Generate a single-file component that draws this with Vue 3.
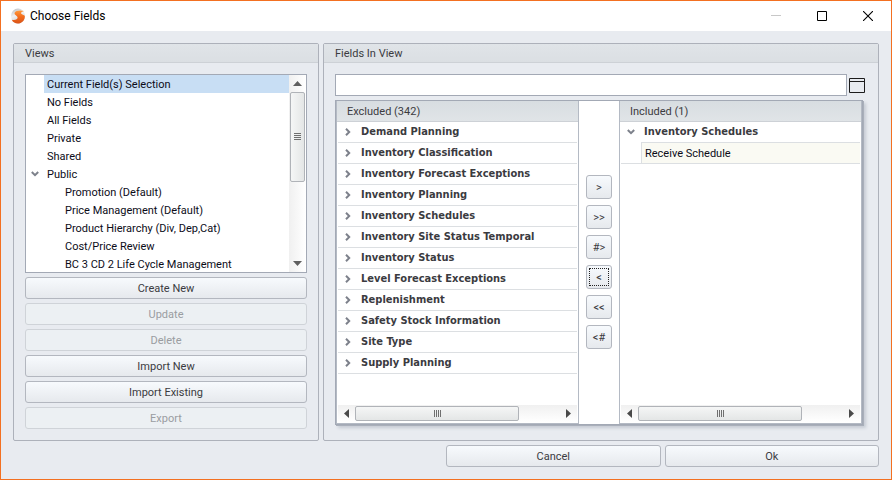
<script setup>
import { ref } from 'vue'

const views = [
  { name: 'Current Field(s) Selection', level: 1 },
  { name: 'No Fields', level: 1 },
  { name: 'All Fields', level: 1 },
  { name: 'Private', level: 1 },
  { name: 'Shared', level: 1 },
  { name: 'Public', level: 1, open: true },
  { name: 'Promotion (Default)', level: 2 },
  { name: 'Price Management (Default)', level: 2 },
  { name: 'Product Hierarchy (Div, Dep,Cat)', level: 2 },
  { name: 'Cost/Price Review', level: 2 },
  { name: 'BC 3 CD 2 Life Cycle Management', level: 2 },
]
const selected = ref('Current Field(s) Selection')
const search = ref('')

const actions = [
  { label: 'Create New' },
  { label: 'Update', disabled: true },
  { label: 'Delete', disabled: true },
  { label: 'Import New' },
  { label: 'Import Existing' },
  { label: 'Export', disabled: true },
]

const excluded = [
  'Demand Planning',
  'Inventory Classification',
  'Inventory Forecast Exceptions',
  'Inventory Planning',
  'Inventory Schedules',
  'Inventory Site Status Temporal',
  'Inventory Status',
  'Level Forecast Exceptions',
  'Replenishment',
  'Safety Stock Information',
  'Site Type',
  'Supply Planning',
]

const moves = ['>', '>>', '#>', '<', '<<', '<#']
const focusedMove = ref('<')
</script>

<template>
  <div class="window">
    <header class="titlebar">
      <svg class="logo" width="16" height="16" viewBox="0 0 16 16" aria-hidden="true">
        <defs>
          <linearGradient id="orb" x1="0" y1="0" x2="0.4" y2="1">
            <stop offset="0" stop-color="#b4b7bb" />
            <stop offset="0.5" stop-color="#f1f1f2" />
            <stop offset="1" stop-color="#c9cbce" />
          </linearGradient>
          <linearGradient id="ess" x1="0" y1="0" x2="0" y2="1">
            <stop offset="0" stop-color="#ff9a3d" />
            <stop offset="0.5" stop-color="#f26a1b" />
            <stop offset="1" stop-color="#d9541a" />
          </linearGradient>
        </defs>
        <ellipse cx="8" cy="8" rx="7" ry="7.6" fill="url(#orb)" />
        <path
          d="M14 3C11 2 5.600 2.200 4.600 4.800C4 7 7.400 7.600 7.600 9.600C7.800 11.800 4.600 12.400 1.800 11.800C3 15 6.500 16 9.200 15.400C13 14.400 15 11.500 14.800 8C14.400 6.800 11.200 6.400 11 5.200C11 4 12.600 3.600 14 3Z"
          fill="url(#ess)"
        />
      </svg>
      <h1>Choose Fields</h1>
      <div class="controls">
        <button type="button" aria-label="Minimize" disabled>
          <svg width="10" height="10" viewBox="0 0 10 10"><path d="M0 4.500H10" stroke="#c8c8c8" /></svg>
        </button>
        <button type="button" aria-label="Maximize">
          <svg width="10" height="10" viewBox="0 0 10 10"><path d="M.5 .5H9.500V9.500H.5Z" fill="none" stroke="#000" /></svg>
        </button>
        <button type="button" aria-label="Close">
          <svg width="10" height="10" viewBox="0 0 10 10"><path d="M0 0L10 10M10 0L0 10" stroke="#000" stroke-width="1.100" /></svg>
        </button>
      </div>
    </header>

    <main class="content">
      <div class="panels">
        <section class="panel views">
          <h2>Views</h2>
          <div class="panel-body">
            <div class="listbox">
              <ul role="tree" aria-label="Views">
                <li
                  v-for="v in views"
                  :key="v.name"
                  role="treeitem"
                  :class="{ child: v.level === 2 }"
                  :aria-selected="v.name === selected"
                  @click="selected = v.name"
                >
                  <span class="gutter">
                    <svg v-if="v.open" width="8" height="6" viewBox="0 0 8 6"><path d="M.8 1L4 4.200L7.200 1" class="chev" /></svg>
                  </span>
                  <span class="label">{{ v.name }}</span>
                </li>
              </ul>
              <div class="scroll vertical" aria-hidden="true">
                <svg width="17" height="17" viewBox="0 0 17 17"><path d="M4 11L8.500 6L13 11Z" fill="#5f5f5f" /></svg>
                <div class="track"><div class="thumb"><i></i></div></div>
                <svg width="17" height="17" viewBox="0 0 17 17"><path d="M4 6L8.500 11L13 6Z" fill="#5f5f5f" /></svg>
              </div>
            </div>
            <button v-for="a in actions" :key="a.label" type="button" class="btn" :disabled="a.disabled">
              {{ a.label }}
            </button>
          </div>
        </section>

        <section class="panel fields">
          <h2>Fields In View</h2>
          <div class="panel-body">
            <div class="search">
              <input v-model="search" type="text" aria-label="Search fields" />
              <button type="button" aria-label="Toggle layout">
                <svg width="16" height="15" viewBox="0 0 16 15"><path d="M.5 .5H15.500V14.500H.5ZM.5 3.500H15.500" fill="none" stroke="#1c1c1c" /></svg>
              </button>
            </div>

            <div class="transfer">
              <section class="pane">
                <h3>Excluded (342)</h3>
                <ul>
                  <li v-for="name in excluded" :key="name">
                    <span class="toggle">
                      <svg width="6" height="8" viewBox="0 0 6 8"><path d="M1 .8L4.200 4L1 7.200" class="chev" /></svg>
                    </span>
                    <b>{{ name }}</b>
                  </li>
                </ul>
                <div class="scroll horizontal" aria-hidden="true">
                  <svg width="17" height="17" viewBox="0 0 17 17"><path d="M11 4L6 8.500L11 13Z" fill="#4a4a4a" /></svg>
                  <div class="track"><div class="thumb"><i></i></div></div>
                  <svg width="17" height="17" viewBox="0 0 17 17"><path d="M6 4L11 8.500L6 13Z" fill="#4a4a4a" /></svg>
                </div>
              </section>

              <div class="moves">
                <button
                  v-for="m in moves"
                  :key="m"
                  type="button"
                  class="btn"
                  :class="{ focused: m === focusedMove }"
                  @click="focusedMove = m"
                >
                  <span>{{ m }}</span>
                </button>
              </div>

              <section class="pane">
                <h3>Included (1)</h3>
                <ul>
                  <li class="open">
                    <span class="toggle">
                      <svg width="8" height="6" viewBox="0 0 8 6"><path d="M.8 1L4 4.200L7.200 1" class="chev" /></svg>
                    </span>
                    <b>Inventory Schedules</b>
                  </li>
                  <li class="leaf"><span>Receive Schedule</span></li>
                </ul>
                <div class="scroll horizontal" aria-hidden="true">
                  <svg width="17" height="17" viewBox="0 0 17 17"><path d="M11 4L6 8.500L11 13Z" fill="#4a4a4a" /></svg>
                  <div class="track"><div class="thumb"><i></i></div></div>
                  <svg width="17" height="17" viewBox="0 0 17 17"><path d="M6 4L11 8.500L6 13Z" fill="#4a4a4a" /></svg>
                </div>
              </section>
            </div>
          </div>
        </section>
      </div>

      <footer class="footer">
        <button type="button" class="btn">Cancel</button>
        <button type="button" class="btn">Ok</button>
      </footer>
    </main>
  </div>
</template>

<style>
body {
  margin: 0;
}
</style>

<style scoped>
* {
  box-sizing: border-box;
}
.window {
  display: flex;
  flex-direction: column;
  min-height: 100vh;
  border: 1px solid #f37021;
  background: #e8ebf0;
  color: #3b3b3f;
  font: 11px/18px Tahoma, Roboto, sans-serif;
}
h1,
h2,
h3,
ul {
  margin: 0;
  padding: 0;
  font-size: inherit;
  font-weight: normal;
  list-style: none;
}
b {
  font-family: Tahoma, 'DejaVu Sans Condensed', 'DejaVu Sans', sans-serif;
}
button {
  padding: 0;
  border: 0;
  background: none;
  color: inherit;
  font: inherit;
}
svg {
  display: block;
  flex: none;
}
.chev {
  fill: none;
  stroke: #7d818b;
  stroke-width: 2;
}

.titlebar {
  display: flex;
  align-items: center;
  height: 30px;
  padding-left: 9px;
  background: #fff;
}
.titlebar h1 {
  flex: 1;
  margin-left: 4px;
  color: #000;
  font: 12px/16px 'Segoe UI', Roboto, sans-serif;
}
.controls {
  display: flex;
}
.controls button {
  display: grid;
  place-items: center;
  width: 46px;
  height: 30px;
}

.content {
  display: flex;
  flex: 1;
  flex-direction: column;
  gap: 4px;
  padding: 12px;
}
.panels {
  display: flex;
  flex: 1;
  gap: 4px;
}
.panel {
  display: flex;
  flex-direction: column;
  border: 1px solid #adb1ba;
  border-radius: 2px;
}
.views {
  flex: 0 0 306px;
}
.fields {
  flex: 1;
}
h2 {
  height: 19px;
  padding-left: 11px;
  border-bottom: 1px solid #cdd1d6;
  background: linear-gradient(#e0e4e8, #dbdfe3);
  line-height: 20px;
}
.panel-body {
  display: flex;
  flex: 1;
  flex-direction: column;
  gap: 4px;
  padding: 11px;
}

.btn {
  height: 22px;
  padding-top: 2px;
  border: 1px solid #b3b7bf;
  border-radius: 3px;
  background: linear-gradient(#f7fafd, #e6e9ed);
  text-align: center;
}
.btn:disabled {
  border-color: #cfd3d8;
  background: #ecf0f3;
  color: #9a9da1;
}

.listbox {
  display: flex;
  flex: 1 1 0;
  min-height: 110px;
  overflow: hidden;
  border: 1px solid #a3a9b5;
  background: #fff;
  color: #0c0c18;
}
.listbox ul {
  flex: 1;
}
.listbox li {
  display: flex;
  height: 18px;
}
.gutter {
  display: grid;
  flex: 0 0 18px;
  place-items: center;
}
.child .gutter {
  flex-basis: 36px;
}
.label {
  flex: 1;
  padding-left: 3px;
  line-height: 20px;
  white-space: nowrap;
}
[aria-selected='true'] .label {
  background: #c8def4;
}

.scroll {
  display: flex;
}
.scroll .track {
  flex: 1;
}
.thumb {
  display: grid;
  place-items: center;
  border: 1px solid #b0b3b8;
  border-radius: 2px;
}
.vertical {
  flex-direction: column;
  width: 17px;
  background: linear-gradient(90deg, #f0f0f0, #fff);
}
.vertical .track {
  padding: 0 1px;
}
.vertical .thumb {
  height: 55%;
  background: linear-gradient(90deg, #f5f6f6, #e4e6e6);
}
.vertical i {
  width: 7px;
  height: 8px;
  background: repeating-linear-gradient(#6f6f6f 0 1px, transparent 1px 2px);
}
.horizontal {
  margin: auto 1px 0;
  background: linear-gradient(#f0f0f0, #fff);
}
.horizontal .track {
  display: flex;
  padding: 1px 0;
}
.horizontal .thumb {
  width: 80%;
  background: linear-gradient(#f5f6f6, #e4e6e6);
}
.horizontal i {
  width: 7px;
  height: 7px;
  background: repeating-linear-gradient(90deg, #6f6f6f 0 1px, transparent 1px 2px);
}

.search {
  display: flex;
  align-items: center;
  gap: 2px;
  padding-right: 2px;
}
.search input {
  flex: 1;
  height: 22px;
  padding: 0 4px;
  border: 1px solid #a3a9b5;
  background: #fff;
  font: inherit;
}

.transfer {
  display: flex;
  flex: 1;
  margin: 0 4px 4px 0;
  border: 1px solid #a3a9b5;
  background: #fff;
  box-shadow: 1px 1px 0 #a9afba, 3px 3px 3px rgba(120, 128, 145, 0.3);
}
.pane {
  display: flex;
  flex: 1;
  flex-direction: column;
  padding-bottom: 1px;
  border: solid #b4bac4;
  border-width: 0 1px 1px;
}
.pane h3 {
  height: 21px;
  padding-left: 10px;
  border-bottom: 1px solid #cdd1d6;
  background: linear-gradient(#d8dde1, #e0e4e7);
  line-height: 21px;
}
.pane ul {
  padding: 0 1px;
}
.pane li {
  display: flex;
  align-items: center;
  height: 21px;
  border-bottom: 1px solid #dcdfe2;
}
.toggle {
  display: grid;
  place-items: center;
  width: 20px;
  margin-right: 3px;
}
.pane .open {
  height: 20px;
  border-bottom: 0;
}
.pane .leaf {
  height: 22px;
  padding-left: 20px;
  color: #0c0c18;
}
.leaf span {
  flex: 1;
  height: 21px;
  padding-left: 3px;
  border: solid #dcdfe2;
  border-width: 1px 0 0 1px;
  background: #fafaf3;
  line-height: 21px;
}

.moves {
  display: flex;
  flex-direction: column;
  align-items: center;
  justify-content: center;
  gap: 6px;
  width: 40px;
  padding-bottom: 2px;
}
.moves .btn {
  width: 26px;
  height: 24px;
  padding: 2px;
}
.moves span {
  display: block;
  height: 18px;
  border: 1px dotted transparent;
  line-height: 17px;
}
.moves .focused span {
  border-color: #222;
}

.footer {
  display: flex;
  gap: 4px;
  width: 50%;
  margin-left: auto;
}
.footer .btn {
  flex: 1;
}
</style>
